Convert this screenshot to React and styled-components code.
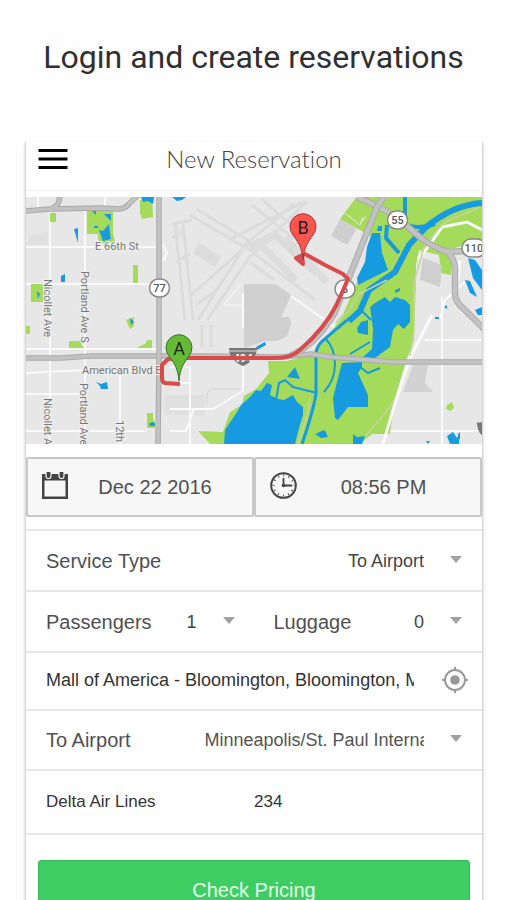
import React from "react";
import styled, { createGlobalStyle } from "styled-components";

const GlobalStyle = createGlobalStyle`
  * { box-sizing: border-box; }
  body { margin: 0; background: #fefefe; font-family: "Liberation Sans", Arial, sans-serif; color: #505050; }
  button, input, select { font: inherit; color: inherit; }
`;

const Page = styled.main`
  display: flex;
  flex-direction: column;
`;

const Headline = styled.h1`
  margin: 0;
  padding: 37px 16px 65px;
  font: 400 32px/40px Roboto, sans-serif;
  color: #303030;
  text-align: center;
`;

const Screen = styled.section`
  margin: 0 24px 0 25px;
  background: #fff;
  border: solid #d6d6d6;
  border-width: 0 1px;
  box-shadow: 0 2px 3px #ccc;
`;

const Header = styled.header`
  display: grid;
  grid-template-columns: 30px 1fr 30px;
  align-items: center;
  height: 49px;
  padding: 0 12px 14px;
  border-bottom: 1px solid #eee;
`;

const MenuButton = styled.button`
  display: flex;
  width: 30px;
  padding: 0;
  border: 0;
  background: none;
  color: #000;
`;

const Title = styled.h2`
  margin: 0;
  font: 300 24px/32px Lato, sans-serif;
  font-variant-ligatures: none;
  color: #444;
  text-align: center;
`;

const MapFigure = styled.figure`
  margin: 6px 0 13px;
  svg { display: block; width: 100%; height: auto; }
`;

const MapText = styled.text`
  font-family: Roboto, sans-serif;
  font-size: ${(p) => p.$size || 11}px;
  font-weight: ${(p) => p.$weight || 400};
  fill: ${(p) => p.$fill || "#777"};
  text-anchor: ${(p) => p.$anchor || "start"};
`;

const Halo = styled(MapText)`
  paint-order: stroke;
  stroke: #eee;
  stroke-width: 2px;
`;

const When = styled.div`
  display: grid;
  grid-template-columns: 1fr 1fr;
  margin-bottom: 12px;
`;

const WhenButton = styled.button`
  display: flex;
  align-items: center;
  height: 60px;
  padding: 0 10px 0 14px;
  border: 2px solid #c8c8c8;
  border-radius: 2px;
  background: #f7f7f7;
  font-size: 20px;
  line-height: 24px;
  svg { flex: none; margin-bottom: 4px; }
  span { flex: 1; text-align: center; }
`;

const Row = styled.div`
  display: grid;
  grid-template-columns: ${(p) => (p.$split ? "1fr 1fr" : "minmax(0, 1fr)")};
  column-gap: ${(p) => p.$gap || 0}px;
  align-items: center;
  height: ${(p) => p.$height || 61}px;
  padding: 0 20px;
  border-top: 2px solid #e8e8e8;
`;

const Field = styled.label`
  display: flex;
  align-items: center;
  min-width: 0;
  font-size: 20px;
  line-height: 24px;
`;

const LabelText = styled.span`
  flex: none;
  margin-right: ${(p) => p.$gap || 12}px;
`;

const Select = styled.select`
  flex: 1;
  min-width: 0;
  margin-right: 26px;
  padding: 0;
  border: 0;
  background: none;
  appearance: none;
  font-size: 18px;
  line-height: 24px;
  text-align-last: right;
  color: #444;
`;

const LongSelect = styled(Select)`
  text-align-last: left;
  color: #555;
`;

const TextInput = styled.input`
  flex: 1;
  width: 100%;
  min-width: 0;
  padding: 0;
  border: 0;
  background: none;
  font-size: ${(p) => p.$size || 17}px;
  line-height: 24px;
  color: #333;
`;

const AddressRow = styled(Row)`
  grid-template-columns: minmax(0, 1fr) 26px;
  column-gap: 28px;
  padding-right: 14px;
  padding-bottom: 2px;
`;

const LocateButton = styled.button`
  display: flex;
  padding: 0;
  border: 0;
  background: none;
  color: #999;
`;

const Actions = styled.div`
  padding: 25px 12px 20px;
  border-top: 2px solid #e8e8e8;
`;

const Submit = styled.button`
  width: 100%;
  height: 60px;
  border: 1px solid #35b95a;
  border-radius: 3px;
  background: #3dcd62;
  color: #e4ffe9;
  font-size: 20px;
  line-height: 24px;
`;

const Caret = () => (
  <svg width="12" height="12" viewBox="0 0 12 12" aria-hidden="true">
    <path d="M0 1h12L6 8z" fill="#a0a0a0" />
  </svg>
);

const MenuIcon = () => (
  <svg width="30" height="22" viewBox="0 0 30 22" aria-hidden="true">
    <path d="M0.500 2.500h29M0.500 11h29M0.500 19.500h29" stroke="currentColor" strokeWidth="3" />
  </svg>
);

const CalendarIcon = () => (
  <svg width="26" height="27" viewBox="0 0 26 27" aria-hidden="true">
    <path d="M0 2h26v25H0zM2.500 8.500v16h21v-16z" fill="#444" fillRule="evenodd" />
    <path d="M4 0v4a2.500 2.500 0 0 0 5 0V0M17 0v4a2.500 2.500 0 0 0 5 0V0" fill="#444" stroke="#f7f7f7" strokeWidth="1.200" />
    <path d="M6.500 1v3.500M19.500 1v3.500" stroke="#444" strokeWidth="2.500" strokeLinecap="round" />
  </svg>
);

const ClockIcon = () => (
  <svg width="27" height="27" viewBox="0 0 27 27" fill="none" stroke="#444" aria-hidden="true">
    <circle cx="13.500" cy="13.500" r="12.300" strokeWidth="2" />
    <path d="M13.500 6v7.500H22" strokeWidth="1.800" />
    <circle cx="13.500" cy="13.500" r="1.800" fill="#444" stroke="none" />
    <circle cx="13.500" cy="13.500" r="10" strokeWidth="2" strokeDasharray="1 4.236" strokeDashoffset="0.500" />
  </svg>
);

const LocateIcon = () => (
  <svg width="26" height="26" viewBox="0 0 26 26" fill="none" stroke="currentColor" strokeWidth="2" aria-hidden="true">
    <circle cx="13" cy="13" r="10" />
    <circle cx="13" cy="13" r="4.800" fill="currentColor" stroke="none" />
    <path d="M13 0v4M13 22v4M0 13h4M22 13h4" />
  </svg>
);

const RoutePin = ({ x, y, letter, fill, edge }) => (
  <g transform={`translate(${x} ${y})`}>
    <path
      d="M0 0C-1-13-5-18-10-25A13 13 0 1 1 10-25C5-18 1-13 0 0z"
      fill={fill}
      stroke={edge}
    />
    <MapText $size={18} $fill="#222" $anchor="middle" y="-26">{letter}</MapText>
  </g>
);

const RouteBadge = ({ x, y, w, children }) => (
  <g>
    <rect x={x - w / 2} y={y - 9} width={w} height="18" rx="9" fill="#fff" stroke="#888" strokeWidth="1.500" />
    <MapText $size={11} $weight={500} $fill="#555" $anchor="middle" x={x} y={y + 4}>{children}</MapText>
  </g>
);

const Road = ({ d, w = 5 }) => (
  <g fill="none" strokeLinejoin="round">
    <path d={d} stroke="#aaa" strokeWidth={w + 1.500} />
    <path d={d} stroke="#c2c2c2" strokeWidth={w - 0.500} />
  </g>
);

const RouteMap = () => (
  <svg viewBox="26 197 456 247" role="img" aria-label="Driving route from A to B">
    <rect x="26" y="197" width="456" height="247" fill="#e7e7e7" />
    <path d="M30 236l18-5v14H26zM165 395h40v20h-40z" fill="#e0e0e0" />

    <g fill="none" stroke="#dcdcdc" strokeWidth="3">
      <path d="M190 215l60 35 65 50M196 209l70 42M175 222l10 98M183 224l10 96M172 224l20-4" />
      <path d="M198 320l48-76 48-40M207 320l42-62 58-57M190 296l62-55M232 238l72-36M252 205l42 34" />
      <path d="M262 199l40 36M250 262l24 18M172 238l12-8M176 262l14-8M196 305l20-14" />
      <path d="M256 240l40 40M272 232l45 42M285 238l42 44" strokeWidth="7" />
      <path d="M250 248l26-14" strokeWidth="8" />
      <path d="M196 248l22 14" strokeWidth="12" />
      <path d="M202 325v22M211 325v22" />
    </g>

    <path d="M244 284h32l15 11-10 23q10-4 10 6l-4 12-10 5-12 0-21 7z" fill="#d0d0d0" />
    <path d="M413 365h15l-3 18 8 9h-30z" fill="#d2d2d2" />

    <g fill="none" stroke="#fafafa" strokeWidth="2">
      <path d="M26 247h132M26 284h132M26 349h132M26 373l60-3h72M26 394h56M26 431h120M50 211v233M85 209v235M120 375v69" />
      <path d="M38 197v10M105 197v12M170 367h20v77M190 383h-10M190 409h23l30-18v-25M170 409h20M170 431h16l8-22" />
      <path d="M243 293v35M291 296l45 32M163 245l4 8-4 8" />
      <path d="M442 297v147M424 340h58M387 431h95M440 320l5-20 20-18" />
    </g>
    <path d="M224 305q8-12 18-21M224 305l17 0M207 405v-9q0-7 8-7h24" fill="none" stroke="#f2f2f2" strokeWidth="1.500" />
    <path d="M207 405v-9q0-7 8-7h24M296 259l-6-9 8-8" fill="none" stroke="#ccc" />

    <g fill="#a5db5a">
      <path d="M50 213h6v9h-6zM87 211h26v22l2 8-10 3-7-4v-6H87zM140 200l12-1 1 18-11 2-2-6zM133 265h5v18h-5zM31 284h12v18H31zM126 320l8-3v9l-4 3zM26 326h4v8h-4zM69 341h12v3l3 4H69zM138 347l7-3 2-4h5v8h-14zM147 413h6v6l2 3v6h-8z" />
      <path d="M358 197h124v43l-34 10 4 7-1 18-10-2-2-18-20-5-3 15-1 73-8 20-12 40-5 36h-18l-12 10H210l-12-13 25 1 7-20 12-7 2-9 12-7 13-16-1-12h19l26-7 28-35 35-80-36-20 18-24z" />
      <path d="M447 405l5-3 2 6-4 3-4-2z" />
    </g>
    <path d="M340 219l17 9-10 17-16-9z" fill="#cfcfcf" />
    <path d="M417 262l8-4 4 16 13 8-8 38-14 30-6-12z" fill="#e7e7e7" />
    <path d="M423 258l19 7-2 22-20-7z" fill="#cfcfcf" />
    <path d="M345 213l15 12 3-8M360 224l6-8" stroke="#efe9d8" fill="none" />

    <g fill="#169be0">
      <path d="M141 197h13l-1 7-5-3-5 1zM172 197h14l-4 3-5 1zM74 229l4-1v15zM61 276l4-2v8h-4zM37 291l3 3-2 5zM104 214h7v7zM92 211h4v4zM94 226h4v2h-4zM99 230l4 1 6-7 1 9 1 6-8 2zM130 318l4 4-3 3zM96 382l5 2 6-2 1 7h-7l-1-3zM149 424l3-2 3 1v3h-5z" />
      <path d="M224 444l1-14 12-18 4-7 9-8 6-7 5 1 6-8 5 2-2 10 8 4 6 1 9-5 4 7 6 5v8l-4 13-4 16z" />
      <path d="M372 233h8l2 20 6 17-30 15-1-7 8-16 2-15zM378 226h4v5h-5z" />
      <path d="M370 307l5-4 10-6 5 5 5-5 10 3 5 5v17l-6 7-6-5-5 6-3 17-15 11h-13l10-9 1-20z" />
      <path d="M342 363l20-1v5l-4 6 10 22v12h-20l-10 13-3-2-2-20 4-16z" />
      <path d="M357 328l4-6 7-2v15l-10-2zM287 377l8-10 5 12zM315 434l9-4 4 7-7 1zM353 444v-10l4 3 8-1-3 8zM325 430l2 5-2 3z" />
      <path d="M468 258l7 2 7 10v20l-9-12zM465 280l5 1 7 16-7-4zM475 310l7-3v8h-4zM447 436l6-4 4 6 2-5v11h-9zM458 434l2-2v7h-2zM426 441h4l-2 3z" />
      <path d="M256 347l9-5 1 3-9 5zM444 307l3-2v4zM435 317h4v2h-4zM395 290l5-2v3l-5 2z" />
    </g>
    <g fill="none" stroke="#169be0">
      <path d="M482 203q-30 2-57 25l-16 17-14 27-26 18-9 21-11 10" strokeWidth="6" />
      <path d="M350 318q-8 6-24 20-11 8-10 18v38q-3 18-14 50" strokeWidth="3" />
      <path d="M405 197v27q10 6 30 0M387 225l-1 13 13 15" strokeWidth="4" />
      <path d="M325 338q10 10 10 26t-11 28M276 400l3-17 6-3 8 7 24 6M362 311l9 9M350 354l20-12M360 367l8 6 12-5" strokeWidth="2" />
    </g>

    <path d="M432 315l-22 43-14 42-13 44M482 230l-15-8-25 5-14 20-10 12M460 260l-4 40" fill="none" stroke="#fafafa" strokeWidth="3" />
    <path d="M480 207l-35 15-20 22-11 38v50l-4 24M396 395l-6 12-25 30M298 444l10-32 2-15M336 323q5-7 13-12l10-17 28-14" fill="none" stroke="#c5d3a0" strokeWidth="1.500" />

    <Road d="M26 211l24-2 50-1 20 1q6-1 9-5l9-9M50 209q8-3 9-8l1-6" w={4} />
    <Road d="M26 358h35l30-2h120l70 1 30-3 20 3 62 5h89" w={4} />
    <Road d="M159 197v160l-1 87" w={4} />
    <Road d="M357 197l20 9 20 11 25 22q15 10 26 13l32-2M448 252q8 10 7 20v22q0 8 10 16l20 20" w={5} />
    <Road d="M385 195l-8 12-29 73-14 34q-20 32-44 42" w={5} />

    <path d="M229 348h28q0 12-14 18-14-6-14-18z" fill="#777" />
    <path d="M229 351h28" stroke="#ddd" />
    <MapText $size={11} $weight={700} $fill="#fff" $anchor="middle" x="243" y="362">494</MapText>
    <path d="M477 422q3 2 6-1v15q-6-4-6-14z" fill="#777" />

    <Halo x="95" y="250">E 66th St</Halo>
    <Halo x="82" y="374">American Blvd E</Halo>
    <Halo transform="translate(44 279) rotate(90)">Nicollet Ave</Halo>
    <Halo transform="translate(44 398) rotate(90)">Nicollet Ave</Halo>
    <Halo transform="translate(81 271) rotate(90)">Portland Ave S</Halo>
    <Halo transform="translate(80 383) rotate(90)">Portland Ave</Halo>
    <Halo transform="translate(116 420) rotate(90)">12th</Halo>

    <RouteBadge x={159.500} y={288} w={20}>77</RouteBadge>
    <RouteBadge x={397.500} y={220} w={20}>55</RouteBadge>
    <RouteBadge x={474} y={248} w={24}>110</RouteBadge>
    <RouteBadge x={345} y={289} w={20}>5</RouteBadge>

    <path
      d="M180 384l-15-1q-3-1-3-5v-13l6-6 17-1h92q14 0 23-8 25-22 37-46l11-25-5-5-18-9-20-11-9 4 7 6-1-9"
      fill="none"
      stroke="#d94a4a"
      strokeWidth="4"
      strokeLinejoin="round"
    />
    <RoutePin x={179} y={381} letter="A" fill="#65b935" edge="#35751c" />
    <RoutePin x={303} y={260} letter="B" fill="#fb5550" edge="#a93432" />
  </svg>
);

export default function App() {
  return (
    <>
      <GlobalStyle />
      <Page>
        <Headline>Login and create reservations</Headline>
        <Screen>
          <Header>
            <MenuButton aria-label="Menu"><MenuIcon /></MenuButton>
            <Title>New Reservation</Title>
          </Header>
          <MapFigure><RouteMap /></MapFigure>
          <When>
            <WhenButton><CalendarIcon /><span>Dec 22 2016</span></WhenButton>
            <WhenButton><ClockIcon /><span>08:56 PM</span></WhenButton>
          </When>
          <Row>
            <Field>
              <LabelText>Service Type</LabelText>
              <Select defaultValue="to"><option value="to">To Airport</option></Select>
              <Caret />
            </Field>
          </Row>
          <Row $split $gap={39}>
            <Field>
              <LabelText>Passengers</LabelText>
              <Select defaultValue="1"><option>1</option></Select>
              <Caret />
            </Field>
            <Field>
              <LabelText>Luggage</LabelText>
              <Select defaultValue="0"><option>0</option></Select>
              <Caret />
            </Field>
          </Row>
          <AddressRow $height={58}>
            <TextInput
              $size={18}
              aria-label="Pickup address"
              defaultValue="Mall of America - Bloomington, Bloomington, MN"
            />
            <LocateButton aria-label="Use my location"><LocateIcon /></LocateButton>
          </AddressRow>
          <Row $height={60}>
            <Field>
              <LabelText $gap={74}>To Airport</LabelText>
              <LongSelect defaultValue="msp">
                <option value="msp">Minneapolis/St. Paul International</option>
              </LongSelect>
              <Caret />
            </Field>
          </Row>
          <Row $split $height={64}>
            <TextInput aria-label="Airline" defaultValue="Delta Air Lines" />
            <TextInput aria-label="Flight number" defaultValue="234" />
          </Row>
          <Actions><Submit>Check Pricing</Submit></Actions>
        </Screen>
      </Page>
    </>
  );
}
